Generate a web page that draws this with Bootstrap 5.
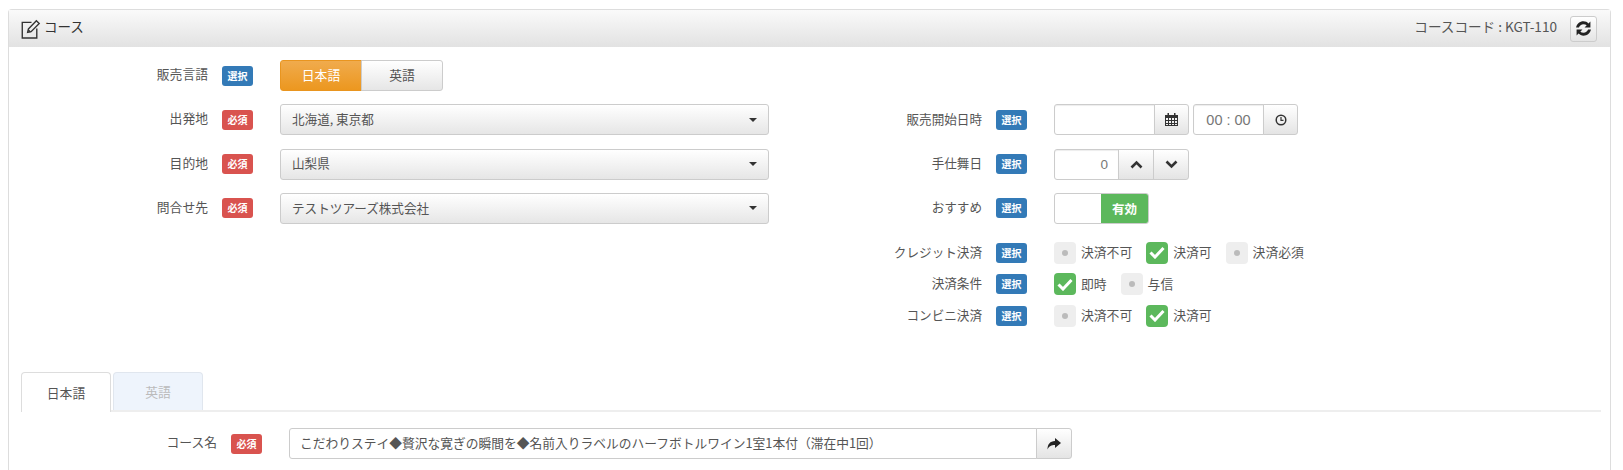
<!DOCTYPE html>
<html lang="ja">
<head>
<meta charset="utf-8">
<title>コース</title>
<link href="https://cdn.jsdelivr.net/npm/bootstrap@5.3.0/dist/css/bootstrap.min.css" rel="stylesheet">
<style>
html,body{height:470px;overflow:hidden;background:#fff}
body{font-family:"Noto Sans CJK JP","Liberation Sans",sans-serif;font-size:12.8px;color:#555;line-height:1.4}
.course-panel{margin:9px 12px 0 8px;border:1px solid #ddd;border-bottom:0;border-radius:4px 4px 0 0;height:470px}
.course-head{height:37px;background:linear-gradient(#fafafa,#e2e2e2);padding:0 13px 0 12px;color:#333}
.course-title{font-size:13.5px;line-height:1;margin-left:3px;padding-bottom:4px}
.course-code{font-size:13.6px;color:#555;margin-right:13px;padding-bottom:3px}
.refresh-btn{width:27px;height:26px;padding:0;border:1px solid #ccc;border-radius:3px;background:linear-gradient(#fff,#e4e4e4);color:#333;line-height:1}
.form-body{padding-top:13px}
.left-col{width:790px;flex:none}
.right-col{padding-top:44.3px;flex:1}
.form-line{height:31px;margin-bottom:13.3px}
.form-line-last{margin-bottom:18px}
.check-line{height:22px;margin-bottom:9.5px}
.label-cell{width:199px;flex:none;text-align:right;color:#555;line-height:1;padding-bottom:2px}
.right-col .label-cell{width:183px;font-size:12.6px}
.tag{flex:none;width:31px;height:20px;margin-left:14px;margin-right:27px;border-radius:3px;color:#fff;font-size:10px;font-weight:700;line-height:20px;text-align:center}
.tag-blue{background:#337ab7}
.tag-red{background:#d9534f}
.lang-btn{width:82px;height:31px;padding:0 0 1px;font-size:12.8px;border:1px solid #ccc;color:#555;background:linear-gradient(#fff,#e6e6e6);border-radius:3px;line-height:1}
.lang-btn.lang-on{color:#fff;background:linear-gradient(#f0ab4d,#ec971f);border-color:#e9951f}
.select-box{width:489px;height:31px;border:1px solid #ccc;border-radius:3px;background:linear-gradient(#fff,#e6e6e6);padding:0 11px 2px 11px;color:#555;font-size:12.6px}
.select-caret{width:0;height:0;margin-top:2px;border-left:4px solid transparent;border-right:4px solid transparent;border-top:4px solid #333}
.field-group{height:31px;flex-wrap:nowrap}
.input-group>.field-input{height:31px;border:1px solid #ccc;border-radius:3px 0 0 3px;font-size:12.8px;color:#555;padding:0 10px;box-shadow:inset 0 1px 1px rgba(0,0,0,.075);min-height:0;flex:none}
.input-group>.w-date{width:101px}
.input-group>.w-time{width:71px;padding:0;text-align:center;font-family:"Liberation Sans",sans-serif;font-size:14.5px;color:#777}
.input-group>.w-num{width:65px;text-align:right;font-size:13.5px;font-family:"Liberation Sans",sans-serif;padding-right:10px;color:#777}
.addon-btn{height:31px;width:35px;padding:0;display:flex;align-items:center;justify-content:center;border:1px solid #ccc;background:linear-gradient(#fff,#e4e4e4);color:#333;border-radius:0 3px 3px 0}
.addon-wide{width:36px}
.switch-box{width:95px;height:31px;border:1px solid #ccc;border-radius:3px;overflow:hidden;justify-content:flex-end}
.switch-on{width:47px;background:#5cb85c;color:#fff;font-weight:700;font-size:12.5px;display:flex;align-items:center;justify-content:center}
.check-item{margin-right:14px;line-height:1}
.check-mark{width:22px;height:22px;border-radius:4px;background:#eee;margin-right:5px;flex:none;display:flex;align-items:center;justify-content:center}
.check-mark i{display:block;width:6px;height:6px;border-radius:50%;background:#bbb}
.check-mark.is-on{background:#5cb85c}
.tab-wrap{margin:36px 9px 0 12px;border-bottom:2px solid #eee;height:40px;flex-wrap:nowrap}
.tab-wrap .nav-link{width:90px;height:40px;margin-right:2px;padding:0;display:flex;align-items:center;justify-content:center;border:1px solid #ddd;border-bottom:0;border-radius:4px 4px 0 0;font-size:12.8px;color:#555;background:#fff}
.tab-wrap .nav-link.tab-off{background:#eef4fc;color:#bbb;border-color:#e0e6ee;height:38px}
.name-line{margin-top:16px}
.name-line .label-cell{width:208px}
.name-input{width:748px;flex:none;height:31px;border:1px solid #ccc;border-radius:3px 0 0 3px;padding:0 10px 2px;color:#555;display:flex;align-items:center;font-size:12.75px}
</style>
</head>
<body>
<div class="course-panel">
  <div class="course-head d-flex align-items-center">
    <svg width="20" height="20" viewBox="0 0 19 19" fill="none" stroke="#333" stroke-width="1.3" aria-hidden="true"><path d="M10 3.200H1.200V18H15V9"/><path d="M7 9.500 14.600 1.600l2.700 2.700-7.700 7.800-3.300.7z"/><path d="M7 10.500 9 12.300"/></svg>
    <span class="course-title">コース</span>
    <span class="course-code ms-auto">コースコード : KGT-110</span>
    <button type="button" class="refresh-btn d-flex align-items-center justify-content-center" aria-label="更新">
      <svg width="17" height="17" viewBox="0 0 16 16" fill="#222" aria-hidden="true"><path d="M8 1.200c1.900 0 3.500.8 4.700 2L14.500 1.400V7H9l2-2c-.8-.7-1.800-1.100-3-1.100-2 0-3.700 1.300-4.300 3.100H1C1.600 3.700 4.500 1.200 8 1.200z"/><path d="M8 14.800c-1.900 0-3.500-.8-4.700-2L1.500 14.600V9H7l-2 2c.8.700 1.800 1.100 3 1.100 2 0 3.700-1.300 4.300-3.100H15c-.6 3.300-3.500 5.800-7 5.800z"/></svg>
    </button>
  </div>
  <div class="form-body">
    <div class="d-flex">
      <div class="left-col">
        <div class="form-line d-flex align-items-center">
          <span class="label-cell">販売言語</span><span class="tag tag-blue">選択</span>
          <div class="btn-group">
            <button type="button" class="btn lang-btn lang-on">日本語</button>
            <button type="button" class="btn lang-btn">英語</button>
          </div>
        </div>
        <div class="form-line d-flex align-items-center">
          <span class="label-cell">出発地</span><span class="tag tag-red">必須</span>
          <div class="select-box d-flex align-items-center justify-content-between"><span>北海道, 東京都</span><span class="select-caret"></span></div>
        </div>
        <div class="form-line d-flex align-items-center">
          <span class="label-cell">目的地</span><span class="tag tag-red">必須</span>
          <div class="select-box d-flex align-items-center justify-content-between"><span>山梨県</span><span class="select-caret"></span></div>
        </div>
        <div class="form-line d-flex align-items-center">
          <span class="label-cell">問合せ先</span><span class="tag tag-red">必須</span>
          <div class="select-box d-flex align-items-center justify-content-between"><span>テストツアーズ株式会社</span><span class="select-caret"></span></div>
        </div>
      </div>
      <div class="right-col">
        <div class="form-line d-flex align-items-center">
          <span class="label-cell">販売開始日時</span><span class="tag tag-blue">選択</span>
          <div class="input-group field-group me-1 w-auto">
            <input class="form-control field-input w-date" type="text" aria-label="販売開始日">
            <button type="button" class="addon-btn" aria-label="日付">
              <svg width="13" height="13" viewBox="0 0 13 13" fill="#333" aria-hidden="true"><path fill-rule="evenodd" d="M2.500 0h1.500v2h5V0h1.500v2H13v11H0V2h2.500zM1 5v2h2V5zm3 0v2h2V5zm3 0v2h2V5zm3 0v2h2V5zM1 8v2h2V8zm3 0v2h2V8zm3 0v2h2V8zm3 0v2h2V8zm-9 3v1h2v-1zm3 0v1h2v-1zm3 0v1h2v-1zm3 0v1h2v-1z"/></svg>
            </button>
          </div>
          <div class="input-group field-group w-auto">
            <input class="form-control field-input w-time" type="text" value="00 : 00" aria-label="時刻">
            <button type="button" class="addon-btn" aria-label="時刻選択">
              <svg width="12" height="12" viewBox="0 0 12 12" fill="none" stroke="#333" aria-hidden="true"><circle cx="6" cy="6" r="4.800" stroke-width="1.500"/><path d="M6 3v3.300h2.500" stroke-width="1.200"/></svg>
            </button>
          </div>
        </div>
        <div class="form-line d-flex align-items-center">
          <span class="label-cell">手仕舞日</span><span class="tag tag-blue">選択</span>
          <div class="input-group field-group w-auto">
            <input class="form-control field-input w-num" type="text" value="0" aria-label="手仕舞日">
            <button type="button" class="addon-btn addon-wide rounded-0" aria-label="増やす"><svg width="13" height="9" viewBox="0 0 13 9" fill="none" stroke="#333" stroke-width="2.600" aria-hidden="true"><path d="M1.500 7.500 6.500 2.500l5 5"/></svg></button>
            <button type="button" class="addon-btn addon-wide" aria-label="減らす"><svg width="13" height="9" viewBox="0 0 13 9" fill="none" stroke="#333" stroke-width="2.600" aria-hidden="true"><path d="M1.500 1.500 6.500 6.500l5-5"/></svg></button>
          </div>
        </div>
        <div class="form-line form-line-last d-flex align-items-center">
          <span class="label-cell">おすすめ</span><span class="tag tag-blue">選択</span>
          <div class="switch-box d-flex"><span class="switch-on">有効</span></div>
        </div>
        <div class="check-line d-flex align-items-center">
          <span class="label-cell">クレジット決済</span><span class="tag tag-blue">選択</span>
          <span class="check-item d-flex align-items-center"><span class="check-mark"><i></i></span>決済不可</span>
          <span class="check-item d-flex align-items-center"><span class="check-mark is-on"><svg width="16" height="13" viewBox="0 0 16 13" fill="none" stroke="#fff" stroke-width="3" aria-hidden="true"><path d="M1.500 6.500 6 11 14.500 2"/></svg></span>決済可</span>
          <span class="check-item d-flex align-items-center"><span class="check-mark"><i></i></span>決済必須</span>
        </div>
        <div class="check-line d-flex align-items-center">
          <span class="label-cell">決済条件</span><span class="tag tag-blue">選択</span>
          <span class="check-item d-flex align-items-center"><span class="check-mark is-on"><svg width="16" height="13" viewBox="0 0 16 13" fill="none" stroke="#fff" stroke-width="3" aria-hidden="true"><path d="M1.500 6.500 6 11 14.500 2"/></svg></span>即時</span>
          <span class="check-item d-flex align-items-center"><span class="check-mark"><i></i></span>与信</span>
        </div>
        <div class="check-line d-flex align-items-center">
          <span class="label-cell">コンビニ決済</span><span class="tag tag-blue">選択</span>
          <span class="check-item d-flex align-items-center"><span class="check-mark"><i></i></span>決済不可</span>
          <span class="check-item d-flex align-items-center"><span class="check-mark is-on"><svg width="16" height="13" viewBox="0 0 16 13" fill="none" stroke="#fff" stroke-width="3" aria-hidden="true"><path d="M1.500 6.500 6 11 14.500 2"/></svg></span>決済可</span>
        </div>
      </div>
    </div>
    <ul class="nav tab-wrap">
      <li class="nav-item"><a class="nav-link" href="#">日本語</a></li>
      <li class="nav-item"><a class="nav-link tab-off" href="#">英語</a></li>
    </ul>
    <div class="name-line d-flex align-items-center">
      <span class="label-cell">コース名</span><span class="tag tag-red">必須</span>
      <div class="input-group field-group w-auto flex-nowrap">
        <div class="name-input">こだわりステイ◆贅沢な寛ぎの瞬間を◆名前入りラベルのハーフボトルワイン1室1本付（滞在中1回）</div>
        <button type="button" class="addon-btn addon-wide" aria-label="翻訳"><svg width="14" height="12" viewBox="0 0 14 12" fill="#222" aria-hidden="true"><path d="M8 0l6 5-6 5V7C4.500 7 2 8 .5 11.500.5 6.500 3 3 8 3z"/></svg></button>
      </div>
    </div>
  </div>
</div>
</body>
</html>
